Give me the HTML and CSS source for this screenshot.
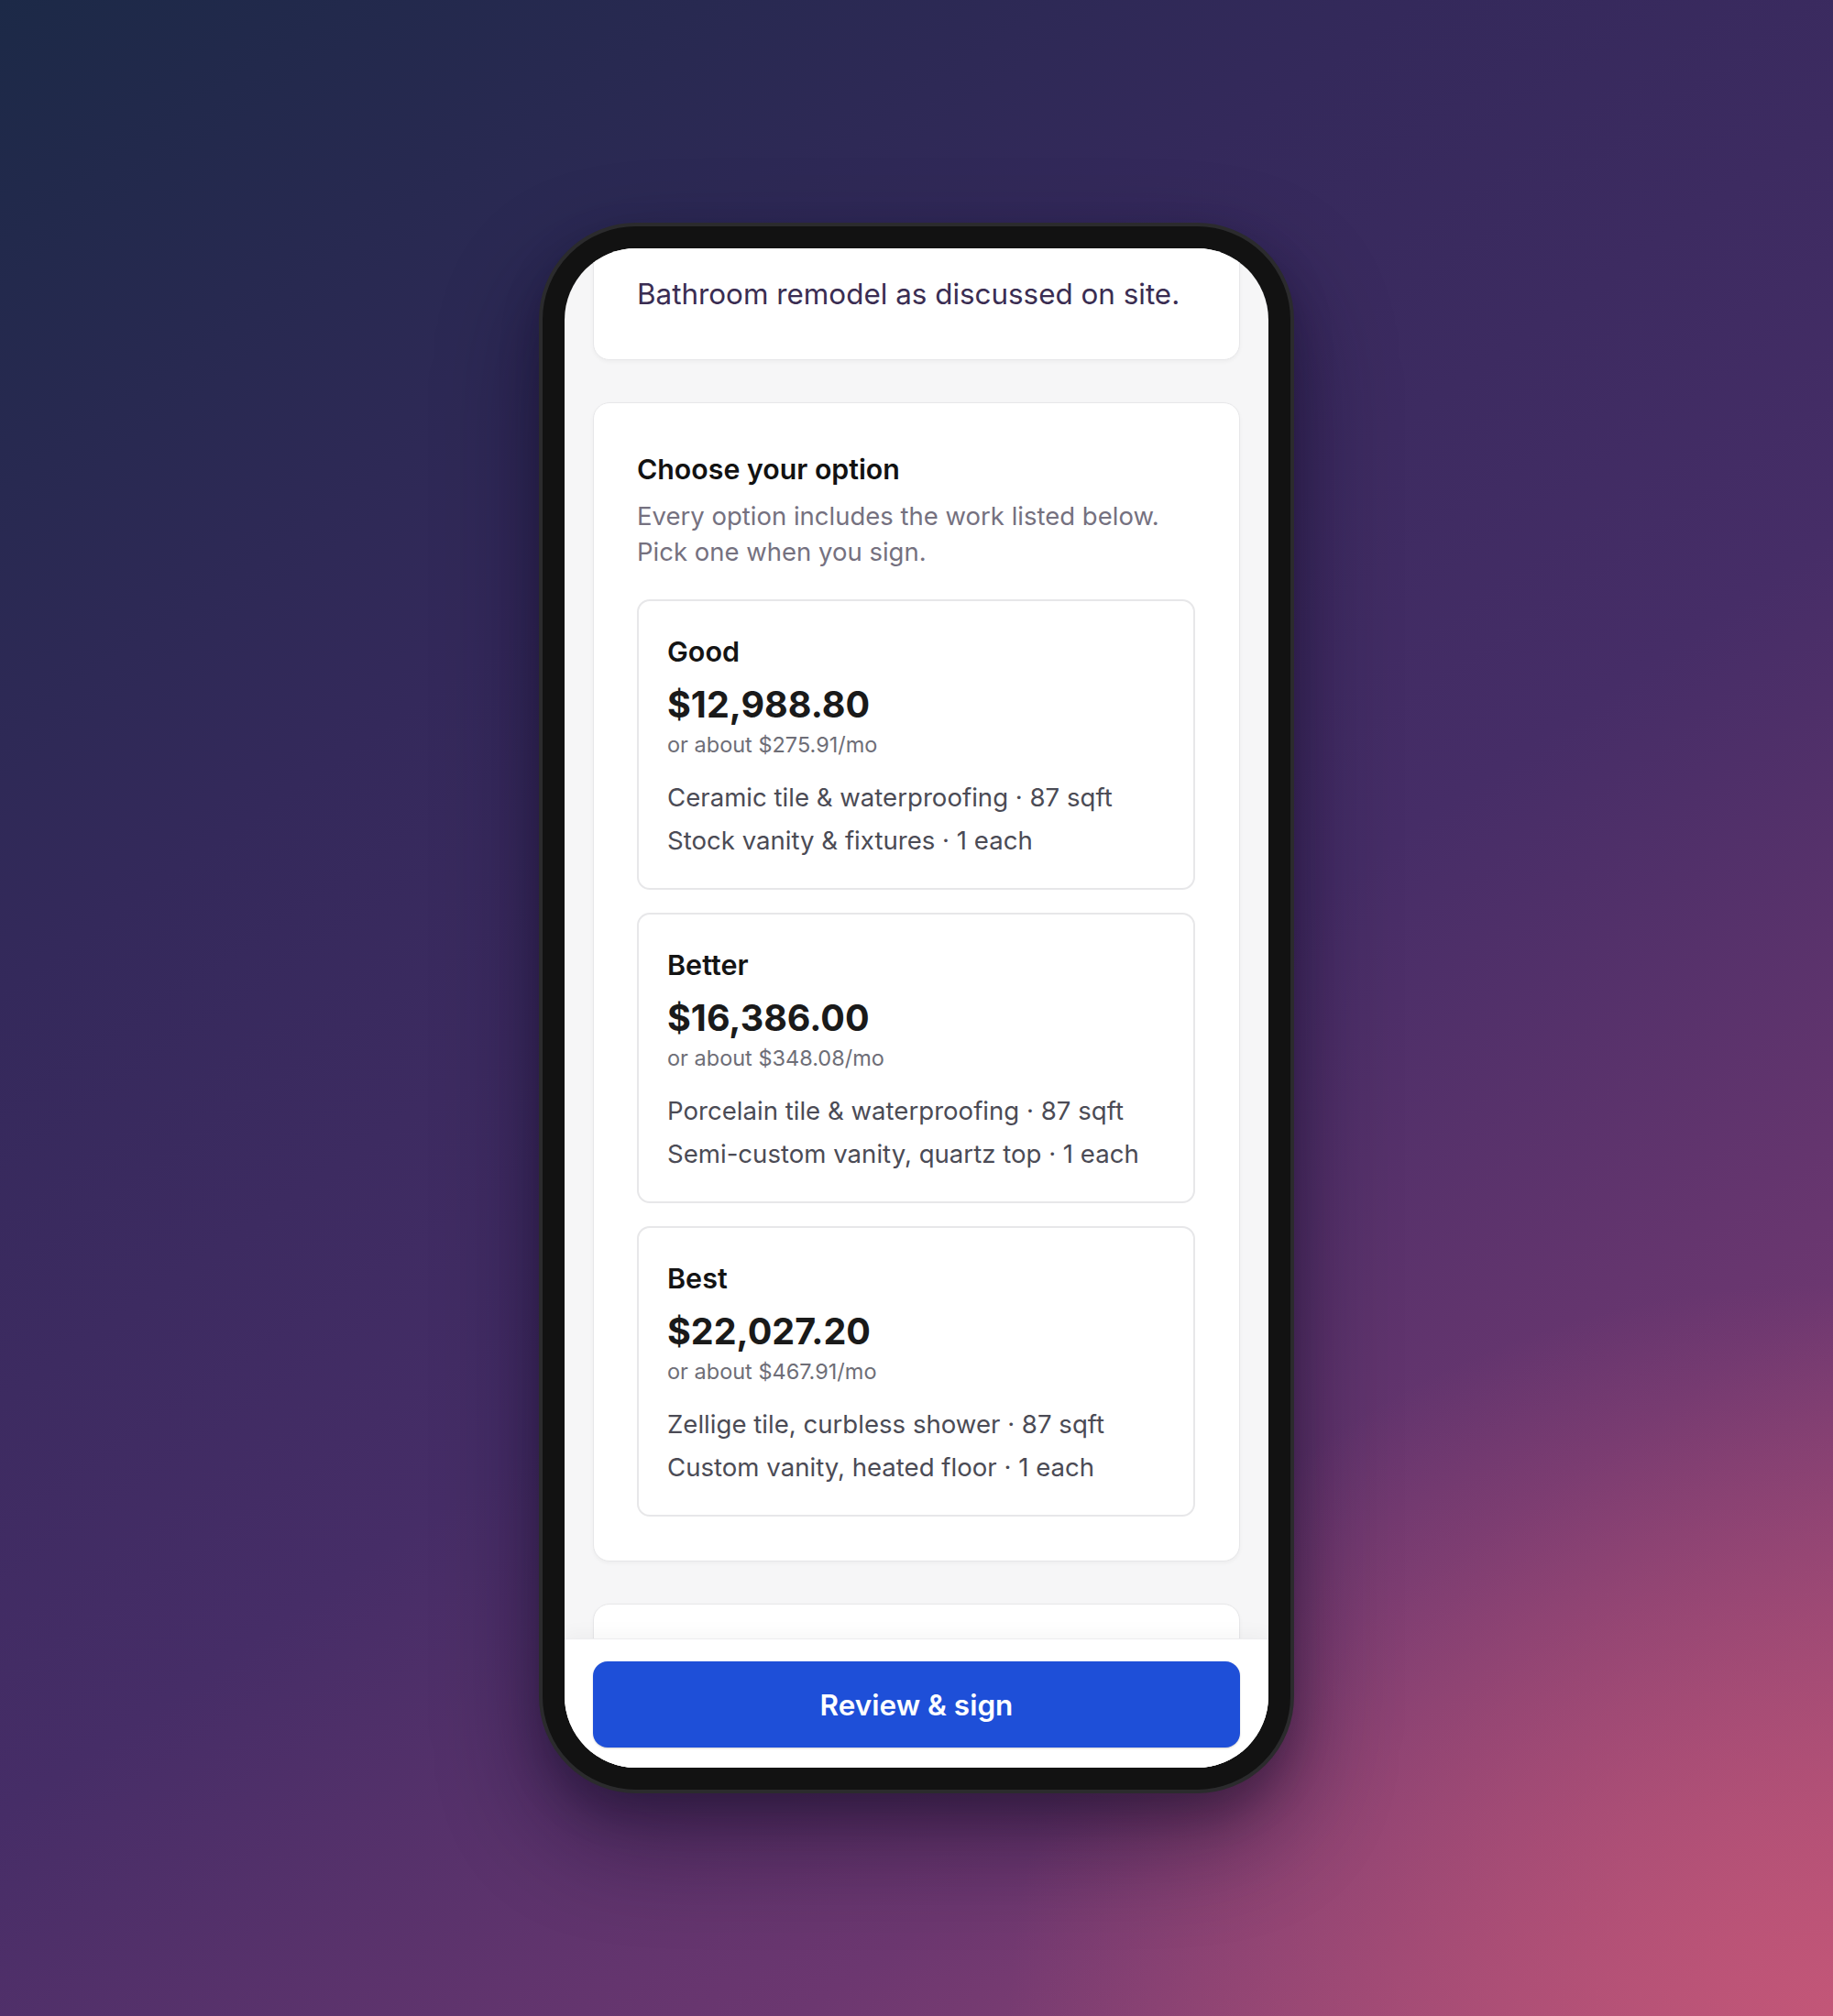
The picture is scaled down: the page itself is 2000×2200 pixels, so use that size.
FILE: index.html
```html
<!DOCTYPE html>
<html lang="en">
<head>
<meta charset="utf-8">
<title>Choose your option</title>
<link rel="stylesheet" href="styles.css">
</head>
<body>
<div class="stage">
  <div class="phone">
    <div class="screen">
      <div class="scroll">
        <section class="card card-note">
          <p class="note">Bathroom remodel as discussed on site.</p>
        </section>
        <section class="card card-options">
          <h2 class="title">Choose your option</h2>
          <p class="sub">Every option includes the work listed below.<br>Pick one when you sign.</p>
          <div class="options">
            <article class="option">
              <h3 class="opt-name">Good</h3>
              <div class="price">$12,988.80</div>
              <div class="monthly">or about $275.91/mo</div>
              <ul class="items">
                <li>Ceramic tile &amp; waterproofing · 87 sqft</li>
                <li>Stock vanity &amp; fixtures · 1 each</li>
              </ul>
            </article>
            <article class="option">
              <h3 class="opt-name">Better</h3>
              <div class="price">$16,386.00</div>
              <div class="monthly">or about $348.08/mo</div>
              <ul class="items">
                <li>Porcelain tile &amp; waterproofing · 87 sqft</li>
                <li>Semi-custom vanity, quartz top · 1 each</li>
              </ul>
            </article>
            <article class="option">
              <h3 class="opt-name">Best</h3>
              <div class="price">$22,027.20</div>
              <div class="monthly">or about $467.91/mo</div>
              <ul class="items">
                <li>Zellige tile, curbless shower · 87 sqft</li>
                <li>Custom vanity, heated floor · 1 each</li>
              </ul>
            </article>
          </div>
        </section>
        <section class="card card-next"></section>
      </div>
      <div class="bottombar">
        <button class="cta" type="button">Review &amp; sign</button>
      </div>
    </div>
  </div>
</div>
</body>
</html>
```

FILE: styles.css
```css
* { box-sizing: border-box; }

html, body {
  margin: 0;
  padding: 0;
}

body {
  font-family: Inter, "Noto Sans", sans-serif;
  width: 2000px;
  height: 2200px;
  overflow: hidden;
}

.stage {
  width: 2000px;
  height: 2200px;
  display: flex;
  align-items: center;
  justify-content: center;
  background:
    radial-gradient(ellipse 900px 800px at 100% 100%, rgba(200, 88, 120, 0.85) 0%, rgba(200, 88, 120, 0) 100%),
    linear-gradient(145deg, #1c2947 0%, #34295b 30%, #462d67 55%, #6c3770 78%, #a44c76 100%);
}

.phone {
  width: 824px;
  height: 1714px;
  border: 4px solid #2b2b2d;
  border-radius: 106px;
  background: #121212;
  padding: 24px;
  box-shadow: 0 50px 110px rgba(12, 6, 30, 0.45), 0 20px 40px rgba(12, 6, 30, 0.25);
}

.screen {
  position: relative;
  width: 100%;
  height: 100%;
  border-radius: 78px;
  overflow: hidden;
  background: #f6f6f7;
}

.scroll {
  display: flex;
  flex-direction: column;
  gap: 46px;
  padding: 0 31px;
  margin-top: -21px;
}

.card {
  background: #ffffff;
  border: 1px solid #e7e7e9;
  border-radius: 18px;
  box-shadow: 0 2px 4px rgba(0, 0, 0, 0.04);
}

.card-note {
  padding: 48px 48px 48px 47px;
}

.note {
  margin: 0;
  font-size: 31.4px;
  line-height: 45px;
  color: #3a2d52;
}

.card-options {
  padding: 51px 48px 48px 47px;
}

.title {
  margin: 0;
  font-size: 30.3px;
  line-height: 43px;
  font-weight: 600;
  color: #121212;
}

.sub {
  margin: 10px 0 0;
  font-size: 27.5px;
  line-height: 39px;
  color: #75717f;
}

.options {
  margin-top: 32px;
  display: flex;
  flex-direction: column;
  gap: 25px;
}

.option {
  border: 2px solid #e7e7e9;
  border-radius: 14px;
  padding: 37px 31px 28px;
  background: #ffffff;
}

.opt-name {
  margin: 0;
  font-size: 30.5px;
  line-height: 36px;
  font-weight: 600;
  color: #141414;
}

.price {
  margin-top: 17px;
  font-size: 39.5px;
  line-height: 46px;
  font-weight: 700;
  color: #1a1a1a;
}

.monthly {
  margin-top: 5px;
  font-size: 23.5px;
  line-height: 31px;
  color: #6e6e77;
}

.items {
  list-style: none;
  margin: 19px 0 0;
  padding: 0;
  font-size: 27.6px;
  line-height: 47px;
  color: #4b4b55;
}

.card-next {
  height: 240px;
}

.bottombar {
  position: absolute;
  left: 0;
  right: 0;
  bottom: 0;
  height: 141px;
  padding: 24px 31px 23px;
  background: #ffffff;
  border-top: 1px solid #ededef;
  box-shadow: 0 -6px 18px rgba(0, 0, 0, 0.035);
}

.cta {
  display: block;
  width: 100%;
  height: 94px;
  border: 0;
  border-radius: 16px;
  background: #1e4fd8;
  color: #ffffff;
  font-family: Inter, "Noto Sans", sans-serif;
  font-size: 31.5px;
  font-weight: 600;
  box-shadow: 0 1px 2px rgba(0, 0, 0, 0.18);
}
```
